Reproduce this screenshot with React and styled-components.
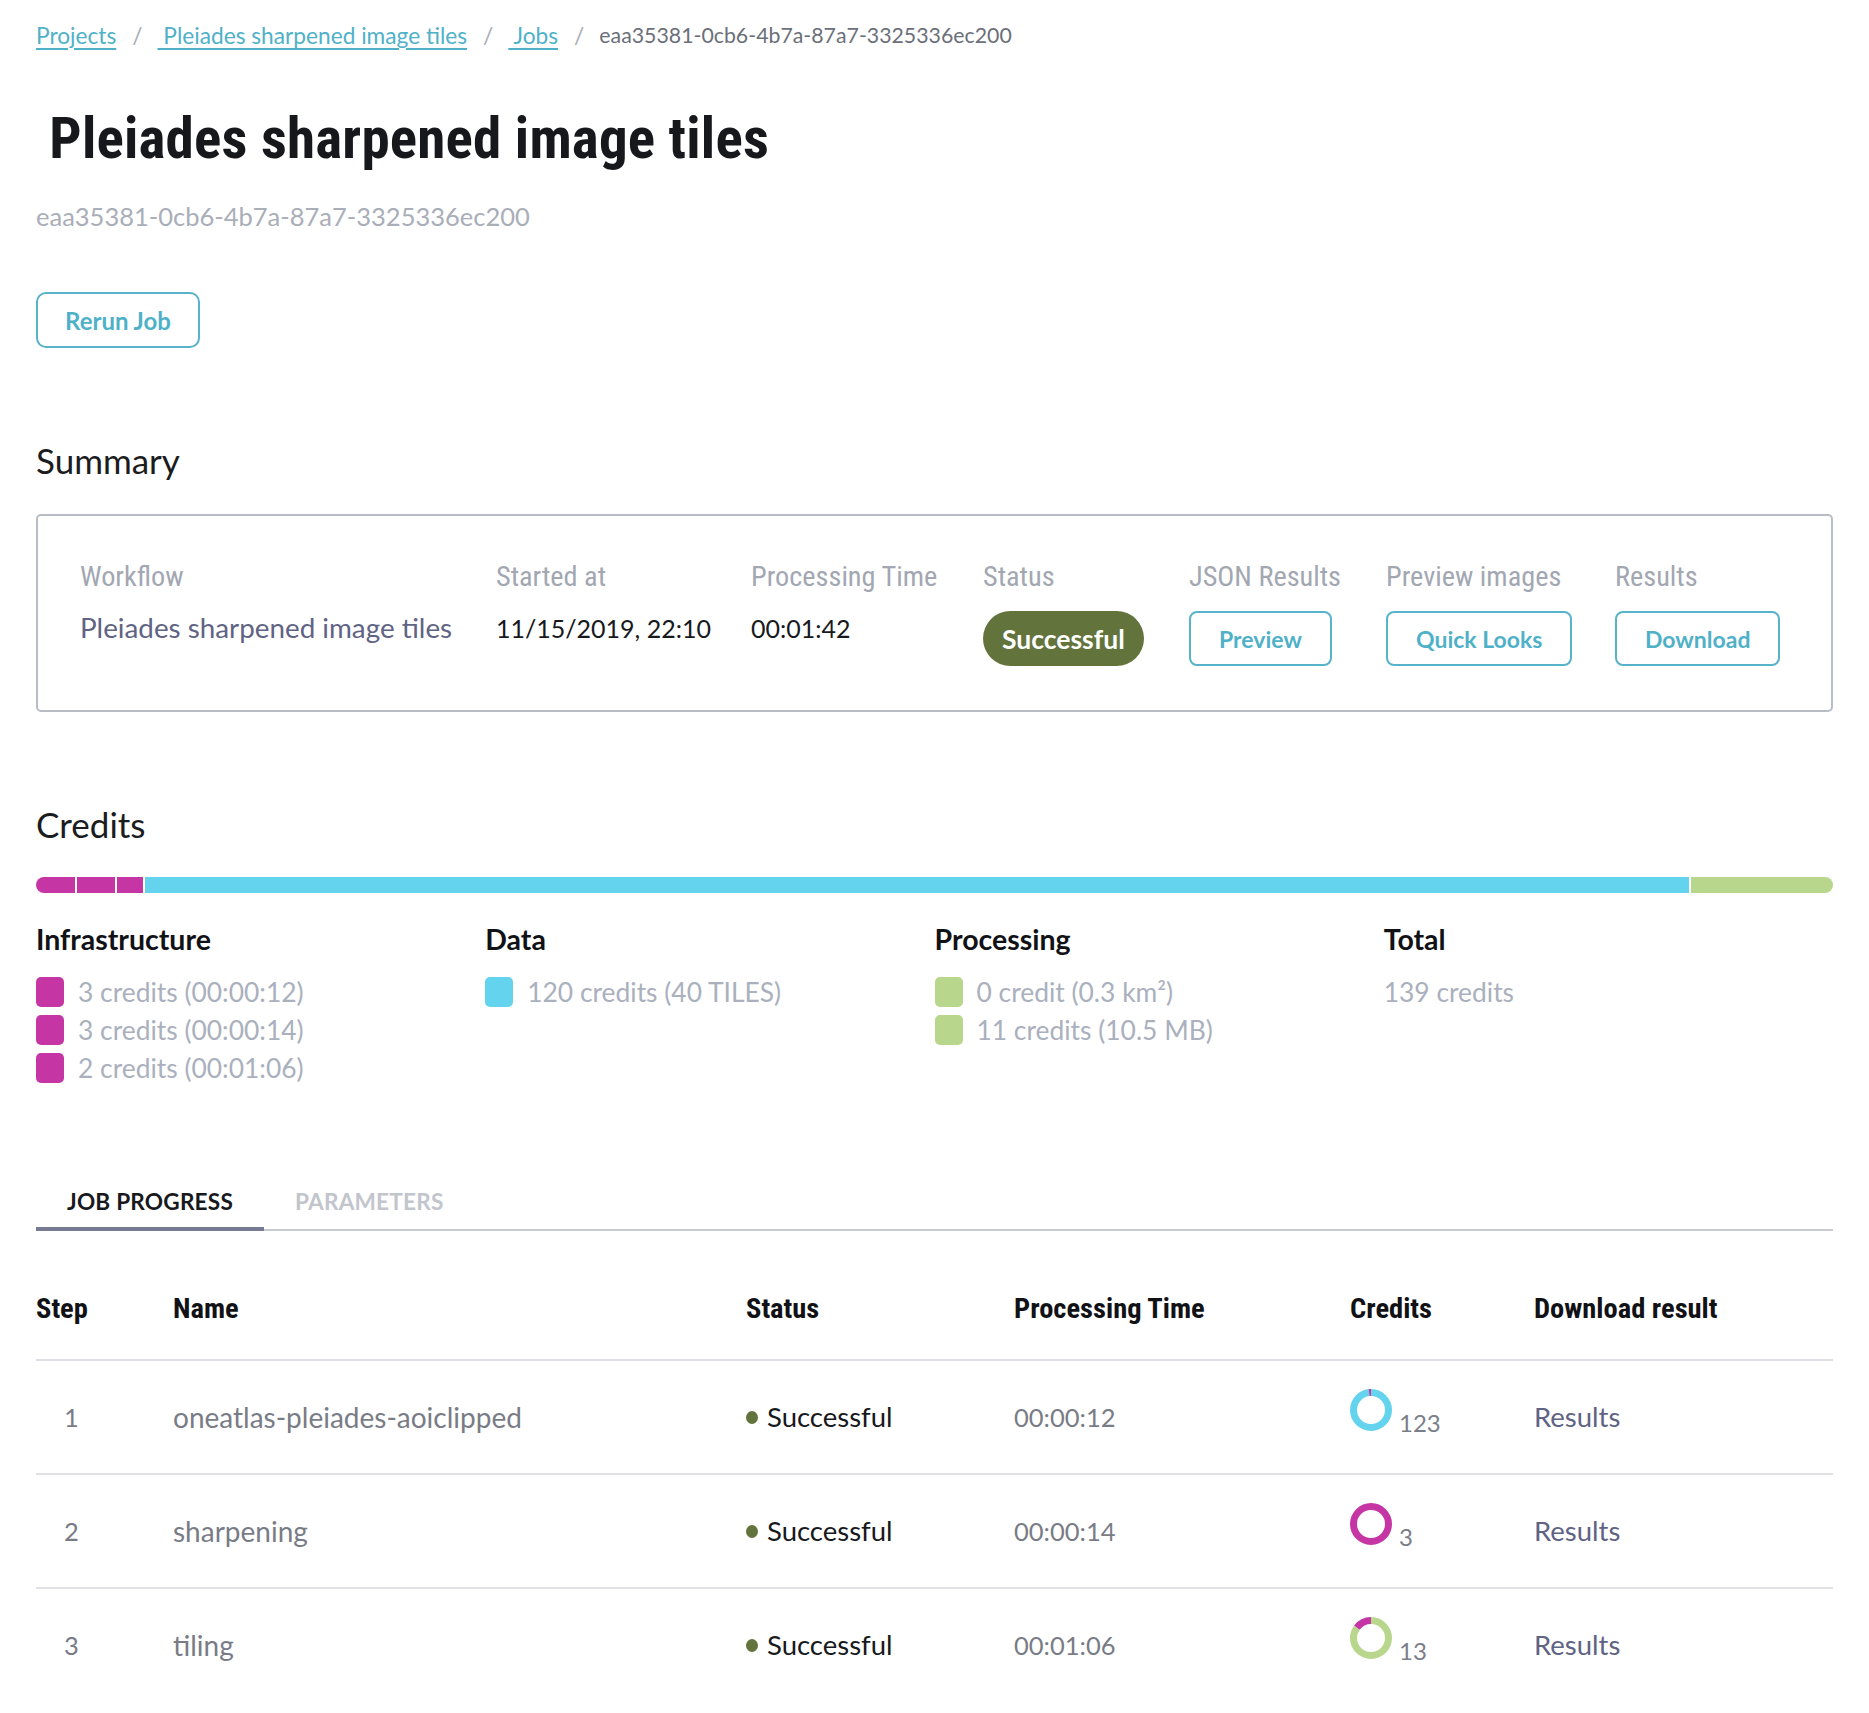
import React from "react";
import styled, { createGlobalStyle } from "styled-components";

const COND = `"Roboto Condensed", "Liberation Sans Narrow", "Arial Narrow", Roboto, sans-serif`;

const GlobalStyle = createGlobalStyle`
  html, body { margin: 0; padding: 0; background: #ffffff; }
  body {
    font-family: Lato, "Noto Sans", sans-serif;
    color: #17191d;
    -webkit-font-smoothing: antialiased;
  }
  * { box-sizing: border-box; }
`;

const COLORS = {
  teal: "#4fb1c8",
  magenta: "#c536a4",
  cyan: "#64d3ee",
  green: "#b8d68c",
  olive: "#63733c",
};

const Page = styled.div`
  padding: 18px 36px 14px;
`;

const Breadcrumbs = styled.nav`
  display: flex;
  align-items: center;
  height: 34px;
  font-size: 22.7px;
`;

const Crumb = styled.a`
  color: ${COLORS.teal};
  text-decoration: underline;
  text-underline-offset: 4px;
  text-decoration-thickness: 1.5px;
  white-space: pre;
  cursor: pointer;
`;

const Sep = styled.span`
  color: #a9adb6;
  margin: 0 15px 0 16px;
`;

const Current = styled.span`
  color: #6b6f79;
  font-size: 21.3px;
`;

const Title = styled.h1`
  margin: 58px 0 0;
  font-family: ${COND};
  font-weight: 700;
  font-size: 57px;
  line-height: 57px;
  letter-spacing: 0.2px;
  white-space: pre;
  color: #16181c;
`;

const JobId = styled.div`
  margin-top: 32px;
  font-size: 25.5px;
  line-height: 34px;
  color: #a9aeb8;
`;

const OutlineButton = styled.button`
  display: inline-flex;
  align-items: center;
  justify-content: center;
  height: ${(p) => (p.$tall ? 56 : 55)}px;
  padding: 0 ${(p) => (p.$tall ? 27 : 28)}px;
  border: 2px solid #56b3ca;
  border-radius: ${(p) => (p.$tall ? 10 : 8)}px;
  background: #fff;
  color: ${COLORS.teal};
  font-family: Lato, sans-serif;
  font-weight: 700;
  font-size: ${(p) => (p.$tall ? 24 : 23)}px;
  cursor: pointer;
`;

const RerunRow = styled.div`
  margin-top: 59px;
`;

const SectionTitle = styled.h2`
  margin: 92px 0 0;
  font-weight: 400;
  font-size: 35px;
  line-height: 40px;
  color: #1b1c20;
`;

const SummaryBox = styled.div`
  margin-top: 34px;
  border: 2px solid #b8bcc5;
  border-radius: 5px;
  padding: 45px 42px 44px;
  display: grid;
  grid-template-columns: 416px 255px 232px 206px 197px 229px auto;
`;

const SummaryCol = styled.div`
  display: flex;
  flex-direction: column;
  align-items: flex-start;
`;

const SummaryLabel = styled.div`
  font-family: ${COND};
  font-size: 28.3px;
  line-height: 32px;
  color: #a2a7b2;
  white-space: nowrap;
`;

const SummaryValue = styled.div`
  margin-top: 18px;
  font-size: ${(p) => (p.$digits ? 25 : 27.8)}px;
  line-height: 34px;
  color: ${(p) => (p.$muted ? "#5f6384" : "#17191d")};
  white-space: nowrap;
`;

const SummaryAction = styled.div`
  margin-top: 18px;
`;

const StatusPill = styled.span`
  display: inline-flex;
  align-items: center;
  height: 55px;
  padding: 0 19px;
  border-radius: 28px;
  background: ${COLORS.olive};
  color: #fff;
  font-weight: 700;
  font-size: 26.5px;
`;

const CreditBar = styled.div`
  margin-top: 33px;
  display: flex;
  gap: 2px;
  height: 16px;
  border-radius: 8px;
  overflow: hidden;
  background: #fff;
`;

const BarSegment = styled.div`
  background: ${(p) => p.$color};
  min-width: 0;
`;

const CreditGrid = styled.div`
  margin-top: 29px;
  display: grid;
  grid-template-columns: repeat(4, 1fr);
`;

const CreditHead = styled.div`
  font-weight: 700;
  font-size: 28.5px;
  line-height: 34px;
  color: #111216;
`;

const CreditList = styled.div`
  margin-top: 21px;
  display: flex;
  flex-direction: column;
  gap: 8px;
`;

const CreditItem = styled.div`
  display: flex;
  align-items: center;
  height: 30px;
  gap: 14px;
  font-size: 26.4px;
  color: #aab0bd;
  white-space: nowrap;
`;

const Swatch = styled.span`
  width: 28px;
  height: 30px;
  border-radius: 5px;
  background: ${(p) => p.$color};
  flex: none;
`;

const CreditTotal = styled.div`
  margin-top: 21px;
  font-size: 26.4px;
  line-height: 30px;
  color: #aab0bd;
`;

const TabList = styled.div`
  margin-top: 102px;
  display: flex;
  border-bottom: 2px solid #c9cbd2;
`;

const Tab = styled.button`
  margin-bottom: -2px;
  padding: 0 31px 8px;
  border: none;
  border-bottom: 4px solid ${(p) => (p.$active ? "#767b93" : "transparent")};
  background: none;
  font-family: Lato, sans-serif;
  font-weight: 700;
  font-size: 22.6px;
  line-height: 34px;
  letter-spacing: 0.2px;
  text-transform: uppercase;
  color: ${(p) => (p.$active ? "#17191d" : "#c2c5cc")};
  cursor: pointer;
`;

const COLS = "137px 573px 268px 336px 184px 1fr";

const Table = styled.div`
  margin-top: 30px;
`;

const HeadRow = styled.div`
  display: grid;
  grid-template-columns: ${COLS};
  padding: 31px 0 33px;
  border-bottom: 2px solid #dedfe4;
`;

const HeadCell = styled.div`
  font-family: ${COND};
  font-weight: 700;
  font-size: 28.5px;
  line-height: 34px;
  color: #111216;
  white-space: nowrap;
`;

const Row = styled.div`
  display: grid;
  grid-template-columns: ${COLS};
  align-items: center;
  height: 114px;
  border-bottom: 2px solid ${(p) => (p.$last ? "transparent" : "#e0e1e5")};
`;

const Cell = styled.div`
  display: flex;
  align-items: center;
  font-size: ${(p) => (p.$digits ? 25.5 : 27.5)}px;
  line-height: 34px;
  color: ${(p) => p.$color || "#797c86"};
  padding-left: ${(p) => p.$indent || 0}px;
  white-space: nowrap;
`;

const NameText = styled.span`
  font-size: 28px;
`;

const Dot = styled.span`
  width: 12px;
  height: 13px;
  border-radius: 50%;
  background: ${COLORS.olive};
  margin-right: 9px;
  flex: none;
`;

const CreditGroup = styled.div`
  display: flex;
  align-items: flex-end;
  margin-bottom: 14px;
`;

const CreditNum = styled.span`
  margin-left: 7px;
  margin-bottom: -4px;
  font-size: 24px;
  line-height: 24px;
  color: #7b7e88;
`;

function Donut({ segments }) {
  const r = 17.5;
  const c = 2 * Math.PI * r;
  const total = segments.reduce((s, x) => s + x.value, 0);
  let offset = 0;
  return (
    <svg width="42" height="42" viewBox="0 0 42 42" style={{ display: "block" }}>
      <g transform="rotate(-90 21 21)">
        {segments.map((s, i) => {
          const len = (s.value / total) * c;
          const el = (
            <circle
              key={i}
              cx="21"
              cy="21"
              r={r}
              fill="none"
              stroke={s.color}
              strokeWidth="7"
              strokeDasharray={`${len} ${c - len}`}
              strokeDashoffset={-offset}
            />
          );
          offset += len;
          return el;
        })}
      </g>
    </svg>
  );
}

const barSegments = [
  { value: 3, color: COLORS.magenta },
  { value: 3, color: COLORS.magenta },
  { value: 2, color: COLORS.magenta },
  { value: 120, color: COLORS.cyan },
  { value: 11, color: COLORS.green },
];

const creditGroups = [
  {
    title: "Infrastructure",
    color: COLORS.magenta,
    items: ["3 credits (00:00:12)", "3 credits (00:00:14)", "2 credits (00:01:06)"],
  },
  { title: "Data", color: COLORS.cyan, items: ["120 credits (40 TILES)"] },
  {
    title: "Processing",
    color: COLORS.green,
    items: ["0 credit (0.3 km²)", "11 credits (10.5 MB)"],
  },
];

const steps = [
  {
    n: 1,
    name: "oneatlas-pleiades-aoiclipped",
    time: "00:00:12",
    credits: 123,
    donut: [
      { value: 120, color: COLORS.cyan },
      { value: 3, color: COLORS.magenta },
    ],
  },
  {
    n: 2,
    name: "sharpening",
    time: "00:00:14",
    credits: 3,
    donut: [{ value: 3, color: COLORS.magenta }],
  },
  {
    n: 3,
    name: "tiling",
    time: "00:01:06",
    credits: 13,
    donut: [
      { value: 11, color: COLORS.green },
      { value: 2, color: COLORS.magenta },
    ],
  },
];

export default function App() {
  return (
    <>
      <GlobalStyle />
      <Page>
        <Breadcrumbs>
          <Crumb>Projects</Crumb>
          <Sep>/</Sep>
          <Crumb>{" Pleiades sharpened image tiles"}</Crumb>
          <Sep>/</Sep>
          <Crumb>{" Jobs"}</Crumb>
          <Sep>/</Sep>
          <Current>eaa35381-0cb6-4b7a-87a7-3325336ec200</Current>
        </Breadcrumbs>

        <Title>{" Pleiades sharpened image tiles"}</Title>
        <JobId>eaa35381-0cb6-4b7a-87a7-3325336ec200</JobId>

        <RerunRow>
          <OutlineButton $tall>Rerun Job</OutlineButton>
        </RerunRow>

        <SectionTitle>Summary</SectionTitle>
        <SummaryBox>
          <SummaryCol>
            <SummaryLabel>Workflow</SummaryLabel>
            <SummaryValue $muted>Pleiades sharpened image tiles</SummaryValue>
          </SummaryCol>
          <SummaryCol>
            <SummaryLabel>Started at</SummaryLabel>
            <SummaryValue $digits>11/15/2019, 22:10</SummaryValue>
          </SummaryCol>
          <SummaryCol>
            <SummaryLabel>Processing Time</SummaryLabel>
            <SummaryValue $digits>00:01:42</SummaryValue>
          </SummaryCol>
          <SummaryCol>
            <SummaryLabel>Status</SummaryLabel>
            <SummaryAction>
              <StatusPill>Successful</StatusPill>
            </SummaryAction>
          </SummaryCol>
          <SummaryCol>
            <SummaryLabel>JSON Results</SummaryLabel>
            <SummaryAction>
              <OutlineButton>Preview</OutlineButton>
            </SummaryAction>
          </SummaryCol>
          <SummaryCol>
            <SummaryLabel>Preview images</SummaryLabel>
            <SummaryAction>
              <OutlineButton>Quick Looks</OutlineButton>
            </SummaryAction>
          </SummaryCol>
          <SummaryCol>
            <SummaryLabel>Results</SummaryLabel>
            <SummaryAction>
              <OutlineButton>Download</OutlineButton>
            </SummaryAction>
          </SummaryCol>
        </SummaryBox>

        <SectionTitle>Credits</SectionTitle>
        <CreditBar>
          {barSegments.map((s, i) => (
            <BarSegment key={i} $color={s.color} style={{ flexGrow: s.value }} />
          ))}
        </CreditBar>

        <CreditGrid>
          {creditGroups.map((g) => (
            <div key={g.title}>
              <CreditHead>{g.title}</CreditHead>
              <CreditList>
                {g.items.map((it) => (
                  <CreditItem key={it}>
                    <Swatch $color={g.color} />
                    {it}
                  </CreditItem>
                ))}
              </CreditList>
            </div>
          ))}
          <div>
            <CreditHead>Total</CreditHead>
            <CreditTotal>139 credits</CreditTotal>
          </div>
        </CreditGrid>

        <TabList>
          <Tab $active>Job Progress</Tab>
          <Tab>Parameters</Tab>
        </TabList>

        <Table>
          <HeadRow>
            <HeadCell>Step</HeadCell>
            <HeadCell>Name</HeadCell>
            <HeadCell>Status</HeadCell>
            <HeadCell>Processing Time</HeadCell>
            <HeadCell>Credits</HeadCell>
            <HeadCell>Download result</HeadCell>
          </HeadRow>
          {steps.map((s, i) => (
            <Row key={s.n} $last={i === steps.length - 1}>
              <Cell $digits $indent={28}>{s.n}</Cell>
              <Cell>
                <NameText>{s.name}</NameText>
              </Cell>
              <Cell $color="#17191d">
                <Dot />
                Successful
              </Cell>
              <Cell $digits>{s.time}</Cell>
              <Cell>
                <CreditGroup>
                  <Donut segments={s.donut} />
                  <CreditNum>{s.credits}</CreditNum>
                </CreditGroup>
              </Cell>
              <Cell $color="#5f6384">Results</Cell>
            </Row>
          ))}
        </Table>
      </Page>
    </>
  );
}
